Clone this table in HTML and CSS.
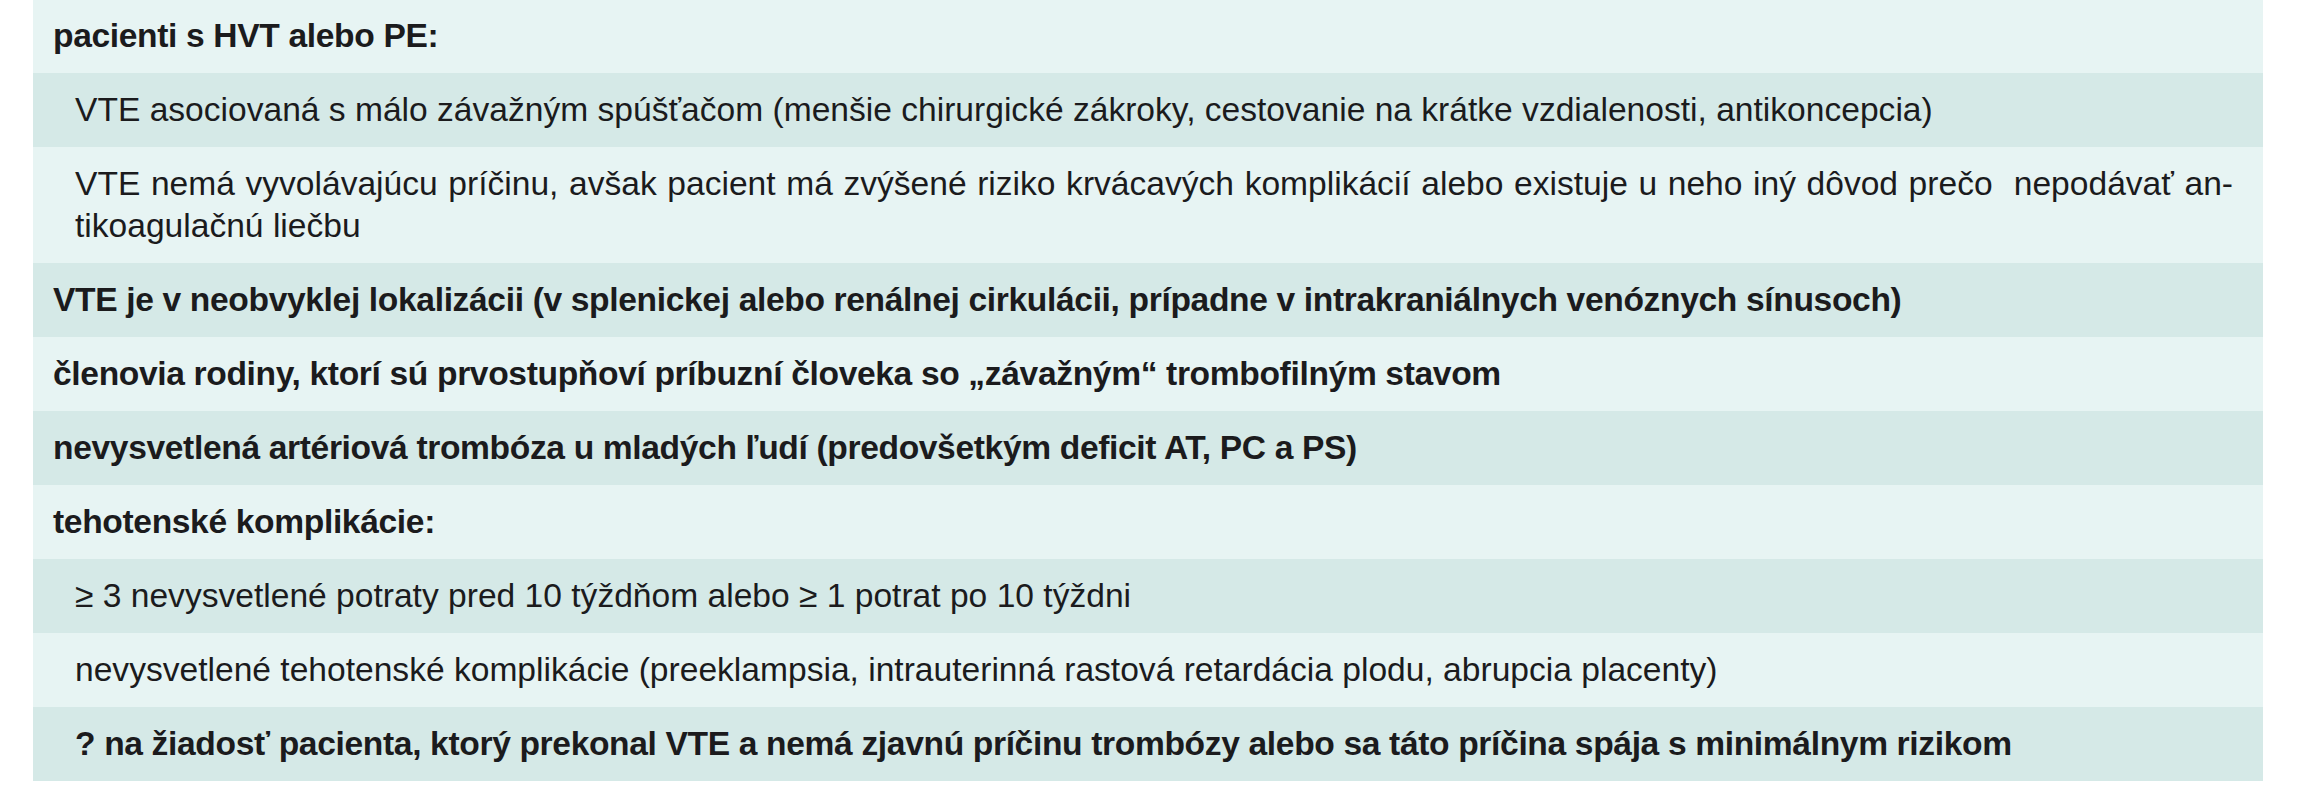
FILE: index.html
```html
<!DOCTYPE html>
<html lang="sk">
<head>
<meta charset="utf-8">
<title>Indikácie</title>
<link rel="stylesheet" href="styles.css">
</head>
<body>
<div class="table">
  <div class="row light first bold l1">pacienti s HVT alebo PE:</div>
  <div class="row dark l2">VTE asociovaná s málo závažným spúšťačom (menšie chirurgické zákroky, cestovanie na krátke vzdialenosti, antikoncepcia)</div>
  <div class="row light l2"><span class="jline">VTE nemá vyvolávajúcu príčinu, avšak pacient má zvýšené riziko krvácavých komplikácií alebo existuje u neho iný dôvod prečo&nbsp; nepodávať an-</span><span class="line">tikoagulačnú liečbu</span></div>
  <div class="row dark bold l1">VTE je v neobvyklej lokalizácii (v splenickej alebo renálnej cirkulácii, prípadne v intrakraniálnych venóznych sínusoch)</div>
  <div class="row light bold l1">členovia rodiny, ktorí sú prvostupňoví príbuzní človeka so „závažným“ trombofilným stavom</div>
  <div class="row dark bold l1">nevysvetlená artériová trombóza u mladých ľudí (predovšetkým deficit AT, PC a PS)</div>
  <div class="row light bold l1">tehotenské komplikácie:</div>
  <div class="row dark l2">≥ 3 nevysvetlené potraty pred 10 týždňom alebo ≥ 1 potrat po 10 týždni</div>
  <div class="row light l2">nevysvetlené tehotenské komplikácie (preeklampsia, intrauterinná rastová retardácia plodu, abrupcia placenty)</div>
  <div class="row dark bold l2">? na žiadosť pacienta, ktorý prekonal VTE a nemá zjavnú príčinu trombózy alebo sa táto príčina spája s minimálnym rizikom</div>
</div>
</body>
</html>
```

FILE: styles.css
```css
html, body {
  margin: 0;
  padding: 0;
  background: #ffffff;
}

body {
  font-family: "Liberation Sans", Arial, sans-serif;
  font-size: 33.6px;
  line-height: 42px;
  color: #1b1b1d;
}

.table {
  display: flex;
  flex-direction: column;
  width: 2230px;
  margin-left: 33px;
}

.row {
  padding: 16px 30px 16px 20px;
  white-space: nowrap;
}

.row.first {
  padding-top: 15px;
}

.light {
  background: #e7f4f3;
}

.dark {
  background: #d5e9e7;
}

.bold {
  font-weight: bold;
  letter-spacing: -0.35px;
}

.l1 {
  padding-left: 20px;
}

.l2 {
  padding-left: 42px;
}

.jline {
  display: block;
  white-space: normal;
  word-spacing: -3px;
  text-align: justify;
  text-align-last: justify;
}

.line {
  display: block;
}
```
